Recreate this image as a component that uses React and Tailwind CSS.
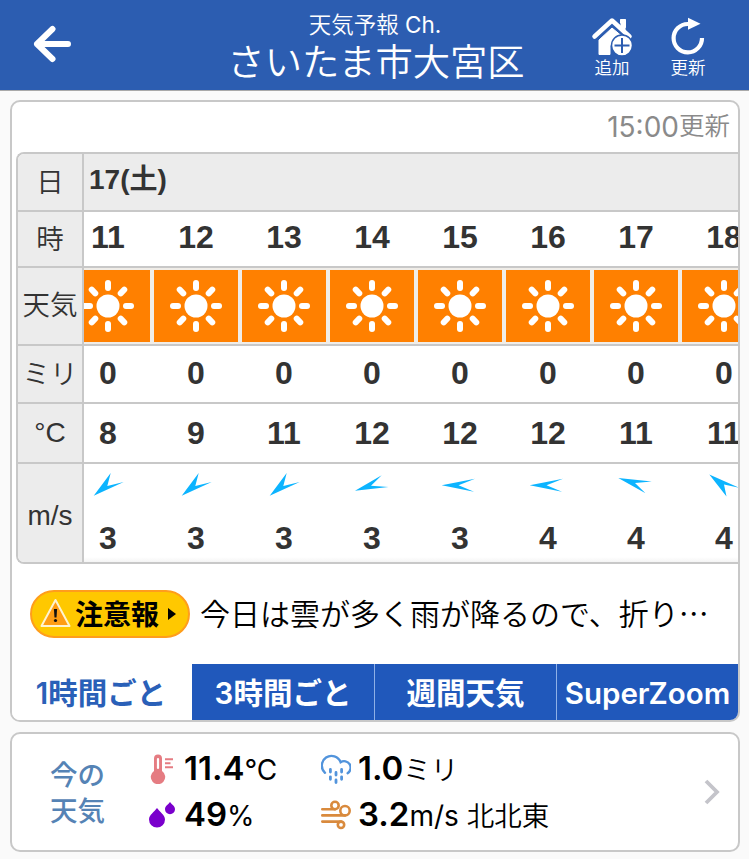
import { clsx } from 'clsx';

const HOURS = [
  { hour: 11, rain: 0, temp: 8, dir: 'NE', wind: 3 },
  { hour: 12, rain: 0, temp: 9, dir: 'NE', wind: 3 },
  { hour: 13, rain: 0, temp: 11, dir: 'NE', wind: 3 },
  { hour: 14, rain: 0, temp: 12, dir: 'ENE', wind: 3 },
  { hour: 15, rain: 0, temp: 12, dir: 'E', wind: 3 },
  { hour: 16, rain: 0, temp: 12, dir: 'E', wind: 4 },
  { hour: 17, rain: 0, temp: 11, dir: 'ESE', wind: 4 },
  { hour: 18, rain: 0, temp: 11, dir: 'SE', wind: 4 },
];

const ARROWS = {
  NE: '-14.3,10.7 2.7,-12 -0.7,1 15.7,-3',
  ENE: '-17,5.7 9.7,-9.7 -1,0.7 16.5,2',
  E: '-18.3,0.3 15,-6.3 -1.5,0.3 14,6.8',
  ESE: '-17.7,-7 15.8,-3.5 -1,-2 9.5,8.2',
  SE: '-14.7,-10.4 14.5,2.5 0,-0.5 2.5,11.5',
};

const TABS = ['1時間ごと', '3時間ごと', '週間天気', 'SuperZoom'];

function Sun() {
  return (
    <svg viewBox="-27 -27 54 54" className="w-[54px] h-[54px] shrink-0">
      <circle r="11.5" fill="#fff" />
      {[0, 45, 90, 135, 180, 225, 270, 315].map((deg) => (
        <line key={deg} x1="0" y1="-18" x2="0" y2="-23" transform={`rotate(${deg})`} stroke="#fff" strokeWidth="6" strokeLinecap="round" />
      ))}
    </svg>
  );
}

function WindArrow({ dir }) {
  return (
    <svg viewBox="-20 -14 40 28" className="w-10 h-7">
      <polygon points={ARROWS[dir]} fill="#0cb4ff" />
    </svg>
  );
}

function RowLabel({ children, className }) {
  return (
    <div className={clsx('flex items-center justify-center border-b-2 border-[#c8c8c8] whitespace-nowrap', className)}>
      {children}
    </div>
  );
}

function Header() {
  return (
    <header className="h-[91px] bg-[#2c5db1] border-b border-[#a9a9a9] text-white flex">
      <div className="w-[220px] pt-[25px] pl-[33px]">
        <svg viewBox="0 0 38 38" className="w-[38px] h-[38px]" fill="none" stroke="#fff" strokeWidth="6" strokeLinecap="round" strokeLinejoin="round">
          <path d="M19.500 4 4 19l15.500 15M4 19h31" />
        </svg>
      </div>
      <div className="w-[312px] flex flex-col items-center whitespace-nowrap">
        <div className="mt-[11px] -ml-0.5 h-7 leading-7 text-[22.500px] font-['Inter','Noto_Sans_CJK_JP'] font-[350]">
          天気予報 <span className="font-normal">Ch.</span>
        </div>
        <h1 className="h-[42px] leading-[42px] text-[37.300px] font-[350]">さいたま市大宮区</h1>
      </div>
      <div className="w-[76px] ml-[42px] pt-[17px] flex flex-col items-center">
        <svg viewBox="0 0 42 40" className="w-[42px] h-10">
          <path d="M29.500 2.500h5v13l-5-4.500zM8 23 21 11l11 9v8H19v9.500H8z" fill="#fff" stroke="#fff" strokeWidth="1" strokeLinejoin="round" />
          <path d="M3.500 20 21 4l17.500 16" fill="none" stroke="#2c5db1" strokeWidth="8" />
          <path d="M29.500 2.500h5v13l-5-4.500z" fill="#fff" />
          <path d="M3.500 19.500 21 3.500l17.500 16" fill="none" stroke="#fff" strokeWidth="4.500" strokeLinecap="round" strokeLinejoin="round" />
          <circle cx="31" cy="28.500" r="10.500" fill="#fff" stroke="#2c5db1" strokeWidth="1.500" />
          <path d="M31 21v15M23.500 28.500h15" stroke="#2c5db1" strokeWidth="2" />
        </svg>
        <div className="h-5 leading-5 text-[17.500px] font-[350]">追加</div>
      </div>
      <div className="w-[76px] pt-[17px] flex flex-col items-center">
        <svg viewBox="0 0 36 40" className="w-9 h-10">
          <path d="M18 7a14.200 14.200 0 1 0 14 14" fill="none" stroke="#fff" strokeWidth="4.200" />
          <path d="M18 .8v12l12.500-6z" fill="#fff" />
        </svg>
        <div className="h-5 leading-5 text-[17.500px] font-[350]">更新</div>
      </div>
    </header>
  );
}

function HourColumn({ data }) {
  const cell = 'flex justify-center items-center border-b-2 border-[#c8c8c8]';
  return (
    <div className="w-[88px] shrink-0 font-['Liberation_Sans'] font-bold text-[32px] leading-none text-[#333]">
      <div className={clsx(cell, 'h-14 pb-1')}>{data.hour}</div>
      <div className={clsx(cell, 'h-[78px] bg-[#f0ede8] px-0.5 py-0.5')}>
        <div className="w-full h-[72px] bg-[#ff8000] flex items-center justify-center">
          <Sun />
        </div>
      </div>
      <div className={clsx(cell, 'h-[58px] pb-0.5')}>{data.rain}</div>
      <div className={clsx(cell, 'h-[60px]')}>{data.temp}</div>
      <div className="h-[98px] flex flex-col items-center pt-[7px] bg-linear-to-b from-white from-95% to-[#f4f4f4]">
        <WindArrow dir={data.dir} />
        <div className="mt-[23px]">{data.wind}</div>
      </div>
    </div>
  );
}

function HourlyTable() {
  return (
    <div className="ml-1 h-[412px] flex border-2 border-r-0 border-[#c8c8c8] rounded-l-lg overflow-hidden text-[#333]">
      <div className="w-[66px] shrink-0 bg-[#ececec] border-r-2 border-[#c8c8c8] text-[27.500px] leading-none font-[350]">
        <RowLabel className="h-[58px] pb-0.5">日</RowLabel>
        <RowLabel className="h-14 pb-[3px]">時</RowLabel>
        <RowLabel className="h-[78px] pb-1">天気</RowLabel>
        <RowLabel className="h-[58px] pb-0.5">ミリ</RowLabel>
        <RowLabel className="h-[60px] font-['Liberation_Sans'] text-[28px]">°C</RowLabel>
        <div className="h-[98px] flex items-center justify-center pt-1.5 font-['Liberation_Sans'] text-[28px]">m/s</div>
      </div>
      <div className="flex-1 min-w-0 overflow-hidden">
        <div className="h-[58px] bg-[#ececec] border-b-2 border-[#c8c8c8] pl-[5px] pb-1 flex items-center font-['Liberation_Sans','Noto_Sans_CJK_JP'] font-bold text-[28px] leading-none">
          17(土)
        </div>
        <div className="flex -ml-5">
          {HOURS.map((h) => (
            <HourColumn key={h.hour} data={h} />
          ))}
        </div>
      </div>
    </div>
  );
}

function Advisory() {
  return (
    <div className="mt-[26px] ml-[18px] flex items-center h-12 whitespace-nowrap">
      <div className="w-40 h-12 rounded-full bg-[#ffc800] border-2 border-[#ff9d1c] flex items-center pl-2 font-bold text-[28px] leading-none text-black">
        <svg viewBox="0 0 32 30" className="w-8 h-[30px] shrink-0 -mt-0.5">
          <path d="M15.500 2 29.500 28H1.500z" fill="#ff9d14" stroke="#fff4cf" strokeWidth="2" strokeLinejoin="round" />
          <path d="M13.900 11h3.200l-.6 8.500h-2z" fill="#111" />
          <circle cx="15.500" cy="22.500" r="1.600" fill="#111" />
        </svg>
        <span className="ml-[3px] -mt-0.5">注意報</span>
        <svg viewBox="0 0 8 12" className="w-2 h-3 ml-[9px]">
          <path d="M0 0v12l8-6z" />
        </svg>
      </div>
      <p className="ml-[10px] -mt-1 text-[30px] leading-none font-[350] text-black">今日は雲が多く雨が降るので、折り…</p>
    </div>
  );
}

function Reading({ value, unit, children, className }) {
  return (
    <div className={clsx('mt-1 leading-[42px]', className)}>
      <span className="text-[33px] font-semibold">{value}</span>
      <span className="text-[28px]">{unit}</span>
      <span className="text-[27.500px] font-[350]">{children}</span>
    </div>
  );
}

function CurrentWeather() {
  return (
    <section className="mt-[10px] ml-[10px] w-[730px] h-[120px] bg-white border-2 border-[#c8c8c8] rounded-[10px] flex">
      <div className="w-[130px] pt-[21px] pl-[38px] text-[27.500px] leading-[36px] font-medium text-[#5583b5]">
        今の
        <br />
        天気
      </div>
      <div className="pt-3 grid grid-cols-[172px_1fr] grid-rows-[46px_46px] flex-1 font-['Inter','Noto_Sans_CJK_JP'] text-black whitespace-nowrap">
        <div className="flex items-center pl-[7px]">
          <svg viewBox="0 0 30 30" className="w-[30px] h-[30px]">
            <path d="M5 4.500a4 4 0 0 1 8 0V17a7.200 7.200 0 1 1-8 0z" fill="#e57c82" />
            <path d="M9 5v9" stroke="#fff" strokeWidth="2.200" strokeLinecap="round" />
            <path d="M16 5.300h8M16 9.300h5.500M16 13.300h8" stroke="#e57c82" strokeWidth="2" />
          </svg>
          <Reading value="11.4" unit="°C" className="ml-[5px]" />
        </div>
        <div className="flex items-center pl-[7px]">
          <svg viewBox="0 0 30 30" className="w-[30px] h-[30px]" fill="none" stroke="#5294dc" strokeWidth="2.400" strokeLinecap="round">
            <path d="M4 18.800A9.700 9.700 0 1 1 19.600 8.200a6.200 6.200 0 0 1 7 11" />
            <path d="M9.400 15.500v2.500M15 18.500v2.500M20.600 15.500v2.500M9.400 22.800v2.500M15 26v2.500M20.600 22.800v2.500" strokeWidth="2.800" />
          </svg>
          <Reading value="1.0" className="ml-[7px]">ミリ</Reading>
        </div>
        <div className="flex items-center pl-[7px]">
          <svg viewBox="0 0 30 30" className="w-[30px] h-[30px]" fill="#7a00cc">
            <path d="M8 8c2.500 3.500 8 7 8 11.500a8 8 0 0 1-16 0C0 15 5.500 11.500 8 8z" />
            <path d="M21 2c1.500 2.300 5 4 5 7.200a5 5 0 0 1-10 0C16 6 19.500 4.300 21 2z" />
          </svg>
          <Reading value="49" unit="%" className="ml-[5px]" />
        </div>
        <div className="flex items-center pl-[7px]">
          <svg viewBox="0 0 30 30" className="w-[30px] h-[30px]" fill="none" stroke="#d98a3d" strokeWidth="2.600" strokeLinecap="round">
            <path d="M1.300 9.200H14M1.300 15.400H24M1.300 21.600H20" />
            <circle cx="14" cy="5.500" r="3.700" />
            <circle cx="24" cy="10.700" r="4.700" />
            <circle cx="20" cy="24.800" r="3.200" />
          </svg>
          <Reading value="3.2" unit="m/s " className="ml-[7px]">北北東</Reading>
        </div>
      </div>
      <svg viewBox="0 0 16 26" className="w-4 h-[26px] mt-[45px] mr-[18px]">
        <path d="M2 2l11 11L2 24" fill="none" stroke="#c4c4ca" strokeWidth="3.800" />
      </svg>
    </section>
  );
}

export default function App() {
  return (
    <div className="w-[749px] h-[859px] overflow-hidden bg-[#fafafa] font-['Noto_Sans_CJK_JP',sans-serif]" lang="ja">
      <Header />
      <main>
        <section className="mt-[9px] ml-[10px] w-[730px] h-[622px] bg-white border-2 border-[#c8c8c8] rounded-[10px] overflow-hidden">
          <div className="h-[50px] pr-2 flex items-center justify-end font-['Inter','Noto_Sans_CJK_JP'] text-[#8a8a8a] font-[350] leading-none">
            <span className="text-[28px] font-normal">15:00</span>
            <span className="text-[25.500px] -mt-0.5">更新</span>
          </div>
          <HourlyTable />
          <Advisory />
          <nav className="mt-[26px] h-14 grid grid-cols-[180px_182px_182px_182px]">
            {TABS.map((tab, i) => (
              <button
                key={tab}
                className={clsx(
                  "flex items-center justify-center whitespace-nowrap font-['Inter','Noto_Sans_CJK_JP'] font-semibold text-[29.500px] leading-none pt-1",
                  i === 0 ? 'bg-white text-[#2a60b8] pr-0.5' : 'bg-[#2058bb] text-white',
                  i > 1 && 'border-l border-[#8fb0e6]'
                )}
              >
                {tab}
              </button>
            ))}
          </nav>
        </section>
        <CurrentWeather />
      </main>
    </div>
  );
}
